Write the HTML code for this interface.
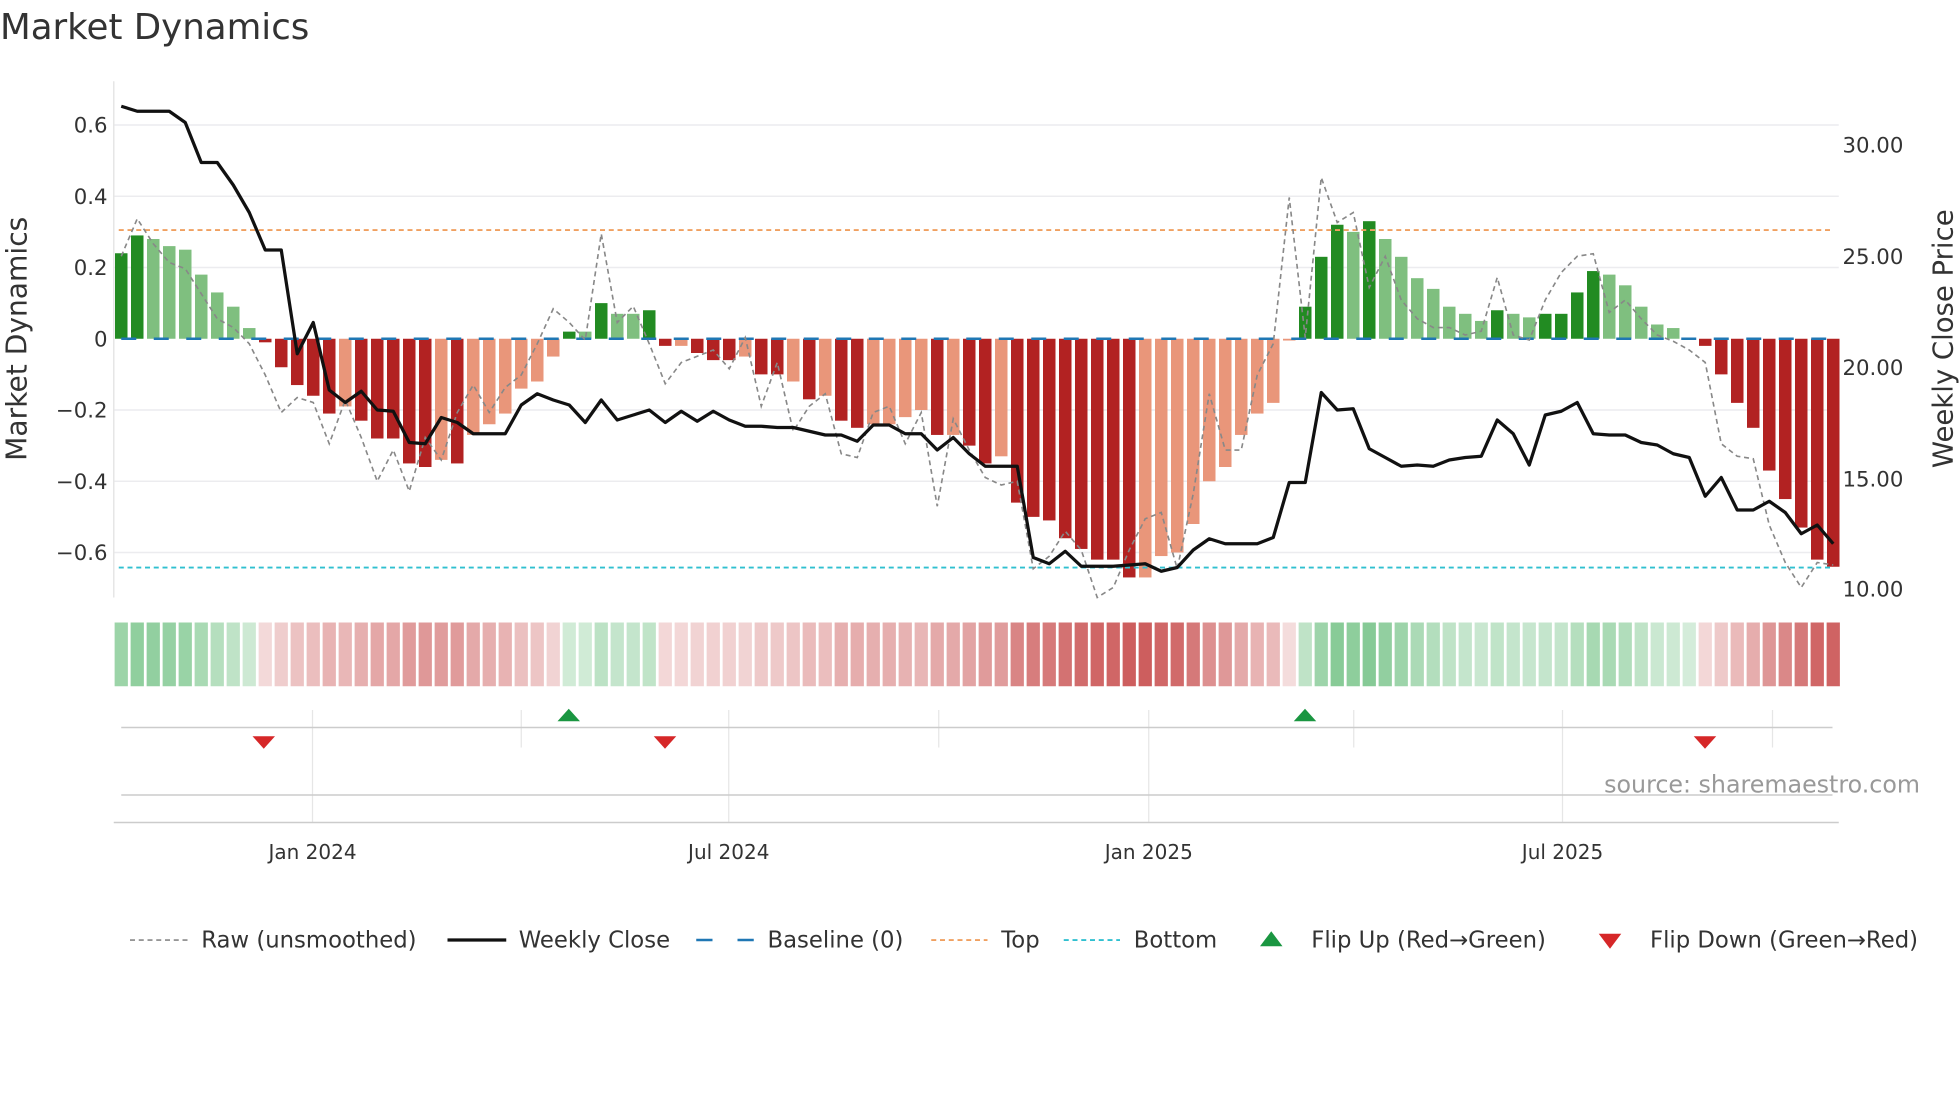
<!DOCTYPE html>
<html><head><meta charset="utf-8"><style>
html,body{margin:0;padding:0;background:#fff;width:1960px;height:1102px;overflow:hidden}
svg{display:block}
text{font-family:"DejaVu Sans","Liberation Sans",sans-serif;fill:#333}
</style></head><body>
<svg id="s" width="1960" height="1102" viewBox="0 0 1568 881.6" xmlns="http://www.w3.org/2000/svg">
<text x="0" y="31" font-size="28.5" fill="#333">Market Dynamics</text>
<g id="grid" stroke="#ececef" stroke-width="1.2">
<line x1="91" x2="1471" y1="100" y2="100"/><line x1="91" x2="1471" y1="157" y2="157"/>
<line x1="91" x2="1471" y1="214" y2="214"/><line x1="91" x2="1471" y1="328" y2="328"/>
<line x1="91" x2="1471" y1="385" y2="385"/><line x1="91" x2="1471" y1="442" y2="442"/>
</g>
<line x1="91" x2="91" y1="65" y2="478" stroke="#e6e6e6" stroke-width="1.2"/>
<g font-size="17" text-anchor="end">
<text x="86" y="106">0.6</text><text x="86" y="163">0.4</text><text x="86" y="220">0.2</text>
<text x="86" y="277">0</text><text x="86" y="334">−0.2</text><text x="86" y="391">−0.4</text><text x="86" y="448">−0.6</text>
</g>
<g font-size="17">
<text x="1474" y="122">30.00</text><text x="1474" y="211">25.00</text><text x="1474" y="300">20.00</text>
<text x="1474" y="389">15.00</text><text x="1474" y="477">10.00</text>
</g>
<text transform="translate(21,271) rotate(-90)" font-size="22.5" text-anchor="middle">Market Dynamics</text>
<text transform="translate(1562,271) rotate(-90)" font-size="22" text-anchor="middle">Weekly Close Price</text>
<g id="bars"></g>
<line x1="95" x2="1467" y1="184" y2="184" stroke="#f0a060" stroke-width="1.5" stroke-dasharray="4 3"/>
<line x1="95" x2="1467" y1="454" y2="454" stroke="#30c0d0" stroke-width="1.5" stroke-dasharray="4 3"/>
<line x1="97" x2="1467" y1="271" y2="271" stroke="#1f77b4" stroke-width="2" stroke-dasharray="12 14"/>
<polyline id="raw" fill="none" stroke="#888" stroke-width="1.3" stroke-dasharray="4 3"/>
<polyline id="px" fill="none" stroke="#111" stroke-width="2.6" stroke-linejoin="round"/>
<g id="strip"></g>
<g stroke="#e6e6e6" stroke-width="1">
<line x1="250" x2="250" y1="568" y2="658"/><line x1="417" x2="417" y1="568" y2="598"/>
<line x1="583" x2="583" y1="568" y2="658"/><line x1="751" x2="751" y1="568" y2="598"/>
<line x1="919" x2="919" y1="568" y2="658"/><line x1="1083" x2="1083" y1="568" y2="598"/>
<line x1="1250" x2="1250" y1="568" y2="658"/><line x1="1418" x2="1418" y1="568" y2="598"/>
</g>
<line x1="97" x2="1466" y1="582" y2="582" stroke="#ccc" stroke-width="1.2"/>
<line x1="97" x2="1466" y1="636" y2="636" stroke="#ccc" stroke-width="1.2"/>
<line x1="91" x2="1471" y1="658" y2="658" stroke="#ccc" stroke-width="1.2"/>
<polygon points="446,577 464,577 455,567" fill="#1a9641"/>
<polygon points="1035,577 1053,577 1044,567" fill="#1a9641"/>
<polygon points="202,589 220,589 211,599" fill="#d62728"/>
<polygon points="523,589 541,589 532,599" fill="#d62728"/>
<polygon points="1355,589 1373,589 1364,599" fill="#d62728"/>
<text x="1536" y="634" font-size="19" text-anchor="end" style="fill:#999">source: sharemaestro.com</text>
<g font-size="16" text-anchor="middle">
<text x="250" y="687">Jan 2024</text><text x="583" y="687">Jul 2024</text>
<text x="919" y="687">Jan 2025</text><text x="1250" y="687">Jul 2025</text>
</g>
<g font-size="18.2">
<line x1="104" x2="150" y1="752" y2="752" stroke="#888" stroke-width="1.3" stroke-dasharray="4 3"/>
<text x="161" y="758">Raw (unsmoothed)</text>
<line x1="358" x2="405" y1="752" y2="752" stroke="#111" stroke-width="2.6"/>
<text x="415" y="758">Weekly Close</text>
<line x1="557" x2="603" y1="752" y2="752" stroke="#1f77b4" stroke-width="2" stroke-dasharray="13 20"/>
<text x="614" y="758">Baseline (0)</text>
<line x1="745" x2="790" y1="752" y2="752" stroke="#f0a060" stroke-width="1.5" stroke-dasharray="4 3"/>
<text x="801" y="758">Top</text>
<line x1="851" x2="896" y1="752" y2="752" stroke="#30c0d0" stroke-width="1.5" stroke-dasharray="4 3"/>
<text x="907" y="758">Bottom</text>
<polygon points="1008,757 1026,757 1017,745" fill="#1a9641"/>
<text x="1049" y="758">Flip Up (Red→Green)</text>
<polygon points="1279,747 1297,747 1288,759" fill="#d62728"/>
<text x="1320" y="758">Flip Down (Green→Red)</text>
</g>
</svg>
<script>
var NS="http://www.w3.org/2000/svg";
var d="0.24D 0.29D 0.28L 0.26L 0.25L 0.18L 0.13L 0.09L 0.03L -0.01R -0.08R -0.13R -0.16R -0.21R -0.19S -0.23R -0.28R -0.28R -0.35R -0.36R -0.34S -0.35R -0.27S -0.24S -0.21S -0.14S -0.12S -0.05S 0.02D 0.02L 0.10D 0.07L 0.07L 0.08D -0.02R -0.02S -0.04R -0.06R -0.06R -0.05S -0.10R -0.10R -0.12S -0.17R -0.16S -0.23R -0.25R -0.24S -0.24S -0.22S -0.20S -0.27R -0.27S -0.30R -0.35R -0.33S -0.46R -0.50R -0.51R -0.56R -0.59R -0.62R -0.62R -0.67R -0.67S -0.61S -0.60S -0.52S -0.40S -0.36S -0.27S -0.21S -0.18S -0.005S 0.09D 0.23D 0.32D 0.30L 0.33D 0.28L 0.23L 0.17L 0.14L 0.09L 0.07L 0.05L 0.08D 0.07L 0.06L 0.07D 0.07D 0.13D 0.19D 0.18L 0.15L 0.09L 0.04L 0.03L 0.0L -0.02R -0.10R -0.18R -0.25R -0.37R -0.45R -0.53R -0.62R -0.64R".split(" ");
var col={D:"#228b22",L:"#7fbf7f",R:"#b22222",S:"#e9967a"};
var P=12.8;
var bars=document.getElementById("bars"),strip=document.getElementById("strip");
d.forEach(function(s,i){
 var v=parseFloat(s),t=s.slice(-1),x=97+i*P;
 var y0=271,y1=271-v*285;
 if(Math.abs(v)>0.001){
 var r=document.createElementNS(NS,"rect");
 r.setAttribute("x",x-5);r.setAttribute("width",10);
 r.setAttribute("y",Math.min(y0,y1));r.setAttribute("height",Math.max(1,Math.abs(y1-y0)));
 r.setAttribute("fill",col[t]);bars.appendChild(r);}
 var q=document.createElementNS(NS,"rect");
 q.setAttribute("x",x-5.3);q.setAttribute("width",10.6);q.setAttribute("y",498);q.setAttribute("height",51);
 var a=Math.min(1,Math.abs(v)/0.67);
 if(v>=0){q.setAttribute("fill","rgb(60,170,85)");q.setAttribute("fill-opacity",(0.22+0.4*Math.min(1,Math.abs(v)/0.33)).toFixed(2));}
 else{q.setAttribute("fill","rgb(190,45,45)");q.setAttribute("fill-opacity",(0.17+0.6*a).toFixed(2));}
 strip.appendChild(q);
});
var px=[85,89,89,89,98,130,130,148,170,200,200,283,258,312,322,313,328,329,354,355,334,338,347,347,347,324,315,320,324,338,320,336,332,328,338,329,337,329,336,341,341,342,342,345,348,348,353,340,340,347,347,360,350,363,373,373,373,446,451,441,453,453,453,452,451,457,454,440,431,435,435,435,430,386,386,314,328,327,359,366,373,372,373,368,366,365,336,347,372,332,329,322,347,348,348,354,356,363,366,397,382,408,408,401,410,427,420,435];
var raw=[205,175,195,210,215,235,255,262,275,300,330,318,322,355,320,350,385,360,393,350,368,330,308,330,310,300,275,247,258,272,187,258,245,275,307,290,285,280,295,270,325,290,345,325,315,363,366,330,325,355,330,405,335,360,382,388,385,455,445,425,440,478,470,440,415,410,455,395,315,360,360,300,275,158,270,142,178,170,230,205,240,255,262,262,268,265,222,268,272,240,218,205,203,250,240,255,268,273,280,290,355,365,367,420,450,470,450,452];
function pts(a){return a.map(function(y,i){return (97+i*P).toFixed(1)+","+y}).join(" ");}
document.getElementById("px").setAttribute("points",pts(px));
document.getElementById("raw").setAttribute("points",pts(raw));
</script>
</body></html>
